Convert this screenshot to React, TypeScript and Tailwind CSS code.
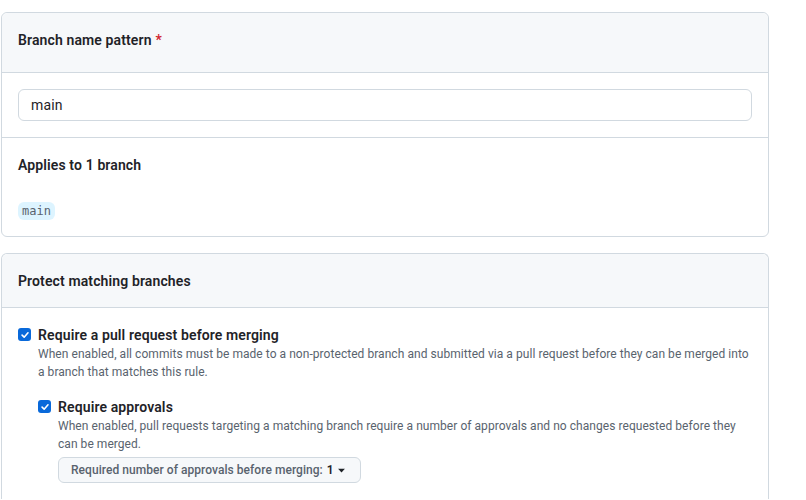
import React from "react";

function Check() {
  return (
    <span className="flex h-[13px] w-[13px] shrink-0 items-center justify-center rounded-[3px] bg-[#0969da]">
      <svg viewBox="0 0 12 12" className="h-[10px] w-[10px]">
        <path d="M2.5 6.2 L5 8.6 L9.6 3.4" fill="none" stroke="#fff" strokeWidth="1.9" strokeLinecap="round" strokeLinejoin="round" />
      </svg>
    </span>
  );
}

export default function App() {
  return (
    <div className="min-h-[500px] bg-white pt-3 pl-px tracking-[0.12px] text-[#1f2328]" style={{ fontFamily: 'Roboto, "Segoe UI", sans-serif' }}>
      <div className="w-[768px] rounded-md border border-[#d1d9e0]">
        <div className="flex h-[60px] items-start rounded-t-md border-b border-[#d1d9e0] bg-[#f6f8fa] px-4 pt-[17px] text-[14px] font-semibold leading-5">
          Branch name pattern <span className="ml-1 text-[#d1242f]">*</span>
        </div>
        <div className="border-b border-[#d1d9e0] px-4 py-4">
          <div className="flex h-[32px] items-center rounded-md border border-[#d1d9e0] px-3 text-[14px]">main</div>
        </div>
        <div className="px-4 pt-[17px] pb-4">
          <div className="text-[14px] font-semibold leading-5">Applies to 1 branch</div>
          <div className="mt-[27px] flex">
            <span className="inline-block rounded-md bg-[#ddf4ff] px-1 text-[12px] leading-[18px] tracking-normal text-[#59636e]" style={{ fontFamily: '"DejaVu Sans Mono", monospace' }}>main</span>
          </div>
        </div>
      </div>

      <div className="mt-4 w-[768px] rounded-t-md border border-b-0 border-[#d1d9e0] pb-4">
        <div className="flex h-[54px] items-start rounded-t-md border-b border-[#d1d9e0] bg-[#f6f8fa] px-4 pt-[17px] text-[14px] font-semibold leading-5">
          Protect matching branches
        </div>
        <div className="px-4 pt-[17px]">
          <div className="flex gap-[7px]">
            <div className="pt-[3px]"><Check /></div>
            <div>
              <div className="text-[14px] font-semibold leading-5">Require a pull request before merging</div>
              <div className="text-[12px] leading-[18px] tracking-[0.05px] text-[#59636e]">
                When enabled, all commits must be made to a non-protected branch and submitted via a pull request before they can be merged into a branch that matches this rule.
              </div>
              <div className="mt-[16px] flex gap-[7px]">
                <div className="pt-[3px]"><Check /></div>
                <div>
                  <div className="text-[14px] font-semibold leading-5">Require approvals</div>
                  <div className="text-[12px] leading-[18px] tracking-[0.05px] text-[#59636e]">
                    When enabled, pull requests targeting a matching branch require a number of approvals and no changes requested before they can be merged.
                  </div>
                  <button className="mt-[4px] flex h-[26px] items-center rounded-md border border-[#d1d9e0] bg-[#f6f8fa] px-3 text-[12px] font-medium tracking-[0.05px] text-[#59636e]">
                    Required number of approvals before merging: <span className="ml-1 font-semibold text-[#1f2328]">1</span>
                    <svg viewBox="0 0 16 16" className="ml-[1px] h-[13px] w-[13px]" fill="#1f2328"><path d="M3.8 5.8h8.4L8 10.4z" /></svg>
                  </button>
                </div>
              </div>
            </div>
          </div>
        </div>
      </div>
    </div>
  );
}
